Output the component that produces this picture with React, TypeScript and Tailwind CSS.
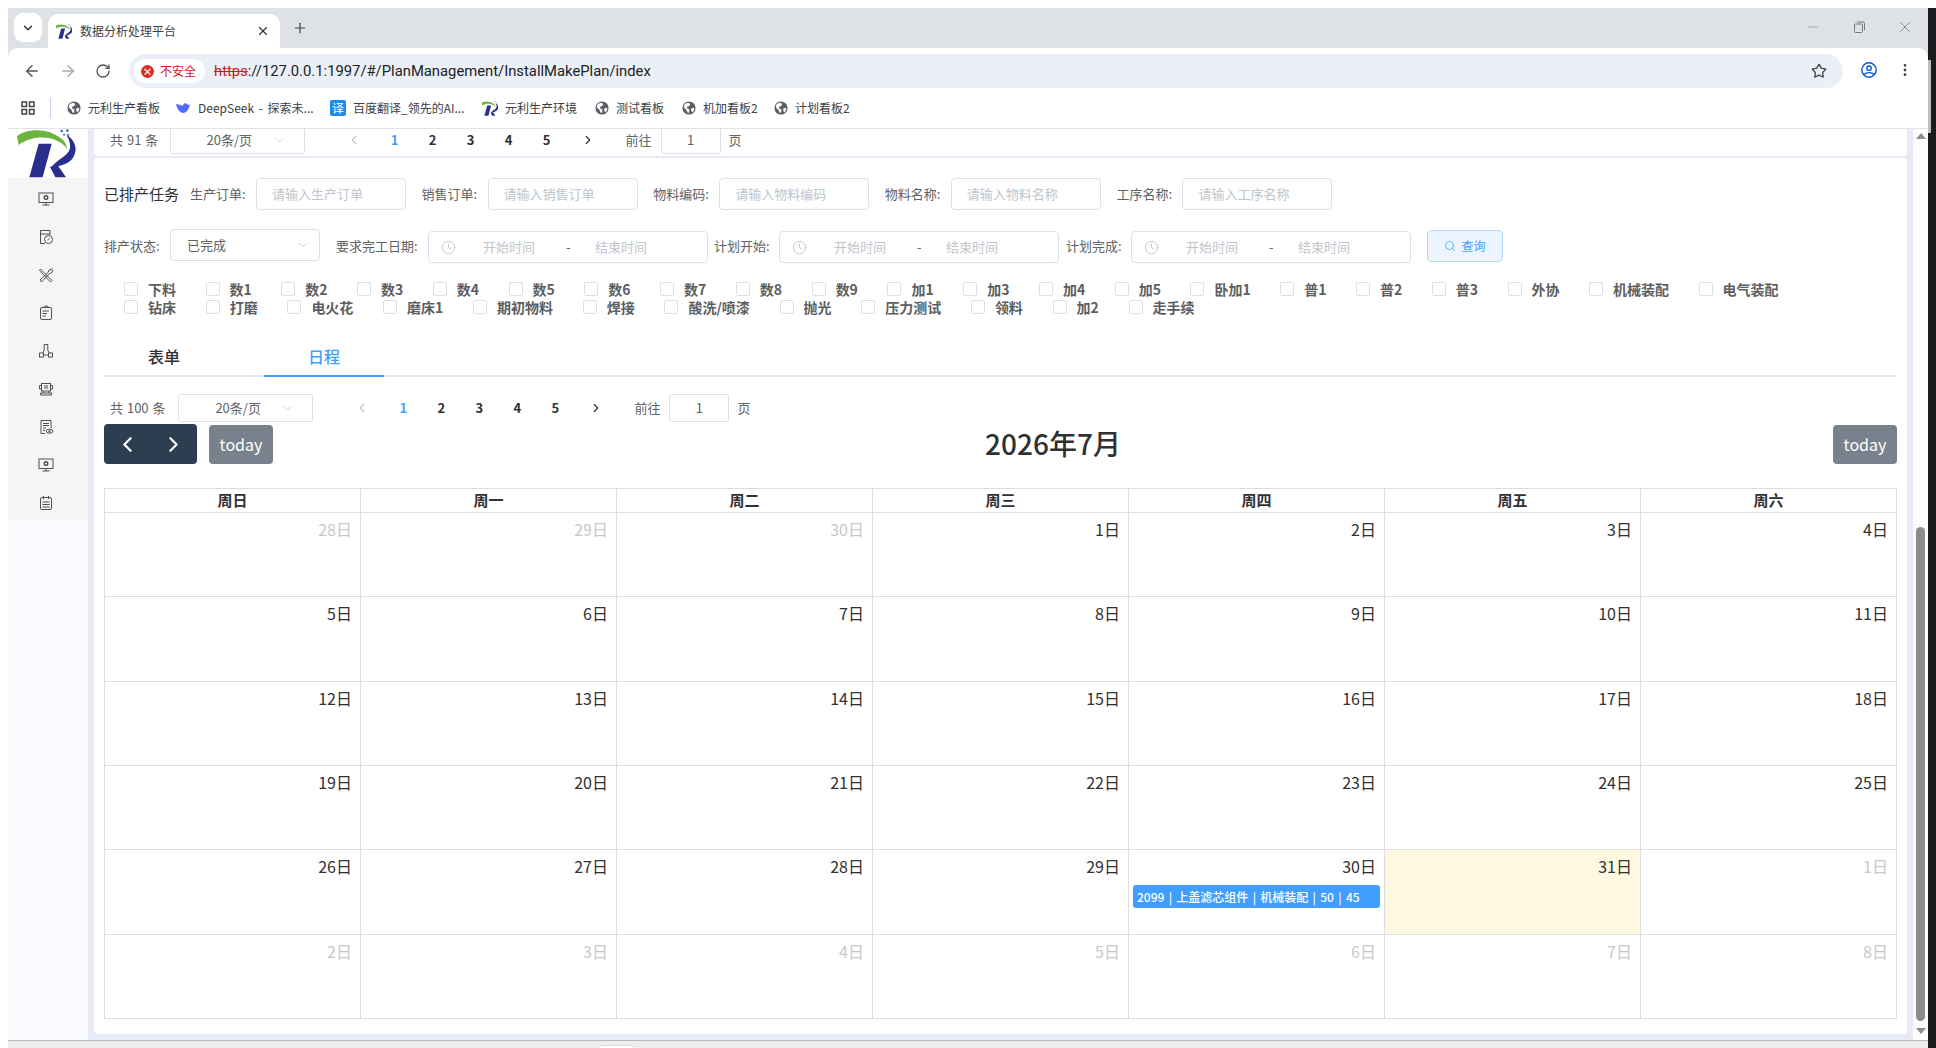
import React from 'react';
import { ArrowLeft, ArrowRight, ChevronDown, ChevronLeft, ChevronRight, Clock, Minus, MoreVertical, Plus, RotateCw, Search, Star, X } from 'lucide-react';

const Logo: React.FC<{ className?: string; viewBox?: string }> = ({ className, viewBox = '0 12 240 147' }) => (
  <svg className={className} viewBox={viewBox}>
    <path d="M27 33 C60 8 125 8 165 45 C172 52 176 62 177 72 C160 45 115 30 70 42 C55 46 42 52 32 60 Z" fill="#6cb33f" />
    <path d="M92 56 L131 56 L104 157 L64 157 Z" fill="#2b2d8c" />
    <path d="M174 28 C200 45 212 72 195 98 C184 114 165 122 130 127 C150 100 180 95 186 70 C188 55 182 40 174 28 Z" fill="#2b2d8c" />
    <path d="M126 125 L150 122 L174 157 L142 157 Z" fill="#2b2d8c" />
    <circle cx="161" cy="18" r="4" fill="#4a6bc8" />
    <circle cx="178" cy="17" r="4" fill="#4a6bc8" />
    <circle cx="168" cy="29" r="3" fill="#4a6bc8" />
    <circle cx="181" cy="29" r="3" fill="#4a6bc8" />
  </svg>
);

const GlobeIcon = () => (
  <svg className="w-[14px] h-[14px] shrink-0" viewBox="0 0 16 16">
    <circle cx="8" cy="8" r="7.5" fill="#5b5e63" />
    <path d="M3 3.5 L7 2 L9.5 3.5 L8 6 L5.5 6.5 L6.5 9 L8.5 9.5 L8 13.5 L6.5 13.5 L5 10 L2 7.5 Z M11 8 L14 8 L13.5 11 L11.5 13 L10.5 10.5 Z" fill="#fff" />
  </svg>
);

const sideIcons: React.ReactNode[] = [
  <g key="a"><rect x="1" y="2" width="14" height="9.5" /><circle cx="8" cy="6.5" r="1.8" strokeWidth="1.4" /><path d="M8 11.5 V14 M4.5 14 H11.5" /></g>,
  <g key="b"><path d="M12 6 V1.5 H2.5 V14.5 H7 M2.5 5 H12" /><circle cx="10.5" cy="10.5" r="4" /><path d="M9.5 11 L11.5 9.5" /></g>,
  <g key="c"><path d="M2.5 2 L14 13.5 L12.5 15 L1.5 3.5 Z" /><path d="M14.5 2 L11 3 L10.5 5 L2 13 L3.5 15 L11.5 6.5 L13.5 6 L15 3" /></g>,
  <g key="d"><rect x="2.5" y="2.5" width="11" height="12" rx="1.5" /><path d="M6 2.5 L7 1 H9.5 L10.5 2.5 M4.5 6 H11 M4.5 8.5 H9 M4.5 11 H8" /></g>,
  <g key="e"><path d="M6.2 7.5 V1.5 H9.8 V7.5" /><rect x="1.5" y="10" width="4" height="4" /><rect x="10.5" y="10" width="4" height="4" /><path d="M5.5 12 H10.5 M6.2 7.5 L4.5 10 M9.8 7.5 L11.5 10" /></g>,
  <g key="f"><rect x="3.5" y="2.5" width="9" height="7.5" /><path d="M3.5 4.5 H1.5 V8 H3.5 M12.5 4.5 H14.5 V8 H12.5 M2.5 12 H13.5 V14 H2.5 Z M5 10 V12 M11 10 V12 M6 5 H10 M6 7 H10" /></g>,
  <g key="g"><path d="M7 14.5 H3 V1.5 H13 V9" /><path d="M5 4.5 H11 M5 6.5 H11 M5 9 H8 M5 11.5 H7" strokeWidth="1.2" /><ellipse cx="11.5" cy="12.2" rx="3.4" ry="2" /><circle cx="11.5" cy="12.2" r="0.8" /></g>,
  <g key="h"><rect x="1" y="2" width="14" height="9.5" /><circle cx="8" cy="6.5" r="1.8" strokeWidth="1.4" /><path d="M8 11.5 V14 M4.5 14 H11.5" /></g>,
  <g key="i"><rect x="2.5" y="2.5" width="11" height="12" rx="1.5" /><path d="M5.5 1 V4 M10.5 1 V4 M4.5 7 H11.5 M4.5 9.5 H11.5 M4.5 12 H11.5" /></g>,
];

const Input: React.FC<{ label: string; text: string }> = ({ label, text }) => (
  <div className="flex items-center">
    <span className="w-[56px] text-[13px] text-[#606266] whitespace-nowrap">{label}:</span>
    <div className="ml-[10px] w-[150px] h-[32px] rounded-[4px] border border-[#dcdfe6] pl-[15px] flex items-center text-[13px] text-[#c0c4cc]">{text}</div>
  </div>
);

const DateRange: React.FC = () => (
  <div className="w-[280px] h-[32px] rounded-[4px] border border-[#dcdfe6] flex items-center text-[13px] text-[#c0c4cc]">
    <Clock className="ml-[12px] w-[15px] h-[15px]" strokeWidth={1.4} />
    <span className="ml-[27px] w-[52px]">开始时间</span>
    <span className="ml-[31px] w-[6px] text-[#606266]">-</span>
    <span className="ml-[23px]">结束时间</span>
  </div>
);

const CheckRow: React.FC<{ items: string[]; gap: string }> = ({ items, gap }) => (
  <div className={`flex h-[18px] items-center ${gap}`}>
    {items.map((t) => (
      <label key={t} className="flex items-center gap-[10px] text-[14px] font-bold leading-[18px] text-[#5c5e62] whitespace-nowrap">
        <span className="w-[14px] h-[14px] rounded-[2px] border border-[#dcdfe6] bg-white" />
        {t}
      </label>
    ))}
  </div>
);

const Pager: React.FC<{ total: string; totalWidth: string }> = ({ total, totalWidth }) => (
  <div className="flex items-center h-[28px] text-[13px] text-[#606266]">
    <span className={`${totalWidth} pl-[6px] whitespace-nowrap [word-spacing:1px]`}>{total}</span>
    <div className="w-[135px] h-[28px] rounded-[3px] border border-[#dcdfe6] flex items-center pl-[36px]">
      <span className="w-[66px]">20条/页</span>
      <ChevronDown className="w-[13px] h-[13px] text-[#c0c4cc]" strokeWidth={1.5} />
    </div>
    <ChevronLeft className="ml-[42px] w-[14px] h-[14px] text-[#c0c4cc]" strokeWidth={2} />
    <div className="ml-[15px] flex font-bold text-[#303133]">
      {['1', '2', '3', '4', '5'].map((n) => (
        <span key={n} className={`w-[38px] text-center ${n === '1' ? 'text-[#409eff]' : ''}`}>{n}</span>
      ))}
    </div>
    <ChevronRight className="ml-[15px] w-[14px] h-[14px] text-[#303133]" strokeWidth={2} />
    <span className="ml-[31px] w-[35px]">前往</span>
    <div className="w-[60px] h-[28px] rounded-[3px] border border-[#dcdfe6] flex items-center justify-center">1</div>
    <span className="ml-[8px]">页</span>
  </div>
);

const row1 = ['下料', '数1', '数2', '数3', '数4', '数5', '数6', '数7', '数8', '数9', '加1', '加3', '加4', '加5', '卧加1', '普1', '普2', '普3', '外协', '机械装配', '电气装配'];
const row2 = ['钻床', '打磨', '电火花', '磨床1', '期初物料', '焊接', '酸洗/喷漆', '抛光', '压力测试', '领料', '加2', '走手续'];
const weekDays = ['周日', '周一', '周二', '周三', '周四', '周五', '周六'];

// 28 June .. 8 August as shown on the calendar page
const days = [
  ...[28, 29, 30].map((d) => ({ d, muted: true })),
  ...Array.from({ length: 31 }, (_, i) => ({ d: i + 1, muted: false })),
  ...Array.from({ length: 8 }, (_, i) => ({ d: i + 1, muted: true })),
];

const bookmarks: { icon: React.ReactNode; text: string; w: string }[] = [
  { icon: <GlobeIcon />, text: '元利生产看板', w: 'w-[108px]' },
  {
    icon: (
      <svg className="w-[16px] h-[14px] shrink-0" viewBox="0 0 16 14">
        <path d="M1 3 C3 12 9 14 12 10 C14 8 14 5 15.5 3.5 L13 4 C11 1 8 2 8 5 C7 4 4 4 1 3 Z" fill="#4d6bfe" />
      </svg>
    ),
    text: 'DeepSeek - 探索未...',
    w: 'w-[155px]',
  },
  {
    icon: <span className="w-[16px] h-[16px] shrink-0 rounded-[2px] bg-[#1a8cf0] text-white text-[12px] leading-[16px] text-center">译</span>,
    text: '百度翻译_领先的AI...',
    w: 'w-[152px]',
  },
  { icon: <Logo className="w-[16px] h-[16px] shrink-0" viewBox="40 0 160 160" />, text: '元利生产环境', w: 'w-[113px]' },
  { icon: <GlobeIcon />, text: '测试看板', w: 'w-[87px]' },
  { icon: <GlobeIcon />, text: '机加看板2', w: 'w-[92px]' },
  { icon: <GlobeIcon />, text: '计划看板2', w: 'w-[84px]' },
];

export default function App() {
  return (
    <div className="w-[1936px] h-[1048px] bg-white overflow-hidden flex flex-col font-['Noto_Sans_CJK_SC','Noto_Sans',sans-serif]">
      <div className="h-2 shrink-0" />
      <div className="flex h-[1040px]">
        <div className="w-2 shrink-0" />
        <div className="w-[1920px] flex flex-col">
          {/* tab strip */}
          <div className="h-10 shrink-0 bg-[#dee1e6] flex items-end">
            <div className="ml-[6px] mb-[6px] w-[28px] h-[29px] rounded-[9px] bg-white flex items-center justify-center">
              <ChevronDown className="w-[14px] h-[14px] text-[#333]" strokeWidth={2.5} />
            </div>
            <div className="ml-[6px] w-[232px] h-[34px] bg-white rounded-t-[10px] flex items-center pl-[8px]">
              <Logo className="w-[16px] h-[16px]" viewBox="40 0 160 160" />
              <span className="ml-[8px] w-[176px] text-[12px] text-[#3c4043]">数据分析处理平台</span>
              <X className="w-[14px] h-[14px] text-[#333]" strokeWidth={2} />
            </div>
            <Plus className="ml-[12px] mb-[12px] w-[16px] h-[16px] text-[#444]" strokeWidth={1.8} />
            <div className="flex-1" />
            <div className="mb-[12px] flex items-center text-[#777]">
              <Minus className="w-[14px] h-[14px]" strokeWidth={1} />
              <svg className="ml-[32px] w-[14px] h-[14px]" viewBox="0 0 14 14" fill="none" stroke="currentColor">
                <rect x="2.5" y="4" width="8" height="8.5" rx="1" />
                <path d="M5 2 H11 Q12.5 2 12.5 3.5 V10" />
              </svg>
              <X className="ml-[30px] mr-[14px] w-[18px] h-[18px]" strokeWidth={1} />
            </div>
          </div>
          {/* address bar */}
          <div className="h-10 shrink-0 bg-[#dee1e6]">
            <div className="h-10 bg-white rounded-t-[10px] flex items-start">
              <div className="mt-[14px] ml-[15px] flex items-center">
                <ArrowLeft className="w-[18px] h-[18px] text-[#555]" strokeWidth={2} />
                <ArrowRight className="ml-[18px] w-[18px] h-[18px] text-[#aaa]" strokeWidth={2} />
                <RotateCw className="ml-[18px] w-[16px] h-[16px] text-[#555]" strokeWidth={2} />
              </div>
              <div className="ml-[18px] mt-[6px] w-[1714px] h-[34px] rounded-full bg-[#ebf0f8] flex items-center pl-[5px]">
                <div className="w-[71px] h-[24px] rounded-full bg-white flex items-center pl-[7px]">
                  <span className="w-[13px] h-[13px] rounded-full bg-[#d93025] text-white text-[10px] leading-[13px] text-center font-bold">×</span>
                  <span className="ml-[6px] text-[12px] text-[#c5221f]">不安全</span>
                </div>
                <span className="ml-[9px] text-[14.8px] text-[#202124] font-['Roboto',sans-serif]">
                  <span className="text-[#c5221f] line-through">https</span>://127.0.0.1:1997/#/PlanManagement/InstallMakePlan/index
                </span>
                <div className="flex-1" />
                <Star className="mr-[16px] w-[16px] h-[16px] text-[#444]" strokeWidth={2} />
              </div>
              <div className="mt-[14px] ml-[18px] flex items-center">
                <svg className="w-[16px] h-[16px]" viewBox="0 0 16 16" fill="none" stroke="#0b57d0" strokeWidth="1.4">
                  <circle cx="8" cy="8" r="7.2" />
                  <circle cx="8" cy="6.2" r="2.2" />
                  <path d="M3.2 12.5 C5 10 11 10 12.8 12.5" />
                </svg>
                <MoreVertical className="ml-[20px] w-[16px] h-[16px] text-[#444]" strokeWidth={2.2} />
              </div>
            </div>
          </div>
          {/* bookmarks */}
          <div className="h-10 shrink-0 bg-white flex items-center pb-[1px] text-[12px] text-[#3c4043]">
            <svg className="ml-[13px] w-[14px] h-[14px]" viewBox="0 0 14 14" fill="none" stroke="#444" strokeWidth="1.5">
              <rect x="1" y="1" width="4.5" height="4.5" />
              <rect x="8.5" y="1" width="4.5" height="4.5" />
              <rect x="1" y="8.5" width="4.5" height="4.5" />
              <rect x="8.5" y="8.5" width="4.5" height="4.5" />
            </svg>
            <span className="ml-[15px] mr-[16px] w-px h-[20px] bg-[#c8d4ea]" />
            {bookmarks.map((b) => (
              <div key={b.text} className={`flex items-center gap-[7px] whitespace-nowrap [word-spacing:2px] ${b.w} shrink-0`}>
                {b.icon}
                <span>{b.text}</span>
              </div>
            ))}
          </div>
          {/* page */}
          <div className="flex h-[912px] border-t border-[#e1e3e6] overflow-hidden">
            <aside className="w-20 shrink-0 bg-[#fafbff] flex flex-col">
              <div className="h-[49px] bg-white overflow-hidden">
                <Logo className="w-[80px] h-[49px]" />
              </div>
              <div className="h-[342px] bg-[#f5f5f5] flex flex-col pt-[2px] pr-[4px]">
                {sideIcons.map((icon, i) => (
                  <div key={i} className="h-[38px] shrink-0 flex items-center justify-center">
                    <svg className="w-[16px] h-[16px]" viewBox="0 0 16 16" fill="none" stroke="#4f4f4f" strokeWidth="1">
                      {icon}
                    </svg>
                  </div>
                ))}
              </div>
            </aside>
            <main className="w-[1825px] bg-[#e8ebf5] pl-[6px] pr-[6px] flex flex-col">
              <div className="h-[27px] shrink-0 bg-white rounded-b-[4px] pl-[10px] overflow-hidden">
                <div className="-mt-[3px]">
                  <Pager total="共 91 条" totalWidth="w-[65.6px]" />
                </div>
              </div>
              <div className="mt-[2px] h-[876px] shrink-0 bg-white rounded-[4px] pl-[10px] pt-[20px]">
                <div className="flex items-center h-[32px]">
                  <span className="w-[86px] text-[15px] text-[#303133] whitespace-nowrap">已排产任务</span>
                  <div className="flex gap-[15.6px]">
                    <Input label="生产订单" text="请输入生产订单" />
                    <Input label="销售订单" text="请输入销售订单" />
                    <Input label="物料编码" text="请输入物料编码" />
                    <Input label="物料名称" text="请输入物料名称" />
                    <Input label="工序名称" text="请输入工序名称" />
                  </div>
                </div>
                <div className="mt-[19px] flex items-center h-[34px] text-[13px] text-[#606266]">
                  <span className="w-[66px]">排产状态:</span>
                  <div className="-mt-[2px] w-[150px] h-[32px] rounded-[4px] border border-[#dcdfe6] flex items-center pl-[16px]">
                    <span className="w-[109px]">已完成</span>
                    <ChevronDown className="w-[14px] h-[14px] text-[#c0c4cc]" strokeWidth={1.5} />
                  </div>
                  <span className="ml-[16px] w-[92px] whitespace-nowrap">要求完工日期:</span>
                  <div className="mt-[2px]"><DateRange /></div>
                  <span className="ml-[6px] w-[65px] whitespace-nowrap">计划开始:</span>
                  <div className="mt-[2px]"><DateRange /></div>
                  <span className="ml-[7px] w-[65px] whitespace-nowrap">计划完成:</span>
                  <div className="mt-[2px]"><DateRange /></div>
                  <button className="ml-[16px] w-[76px] h-[32px] rounded-[4px] border border-[#b3d8ff] bg-[#ecf5ff] text-[#409eff] text-[12px] flex items-center justify-center gap-[5px]">
                    <Search className="w-[12px] h-[12px]" strokeWidth={1.6} />
                    查询
                  </button>
                </div>
                <div className="mt-[17px] pl-[20px] flex flex-col">
                  <CheckRow items={row1} gap="gap-[29.5px]" />
                  <CheckRow items={row2} gap="gap-[29.7px]" />
                </div>
                <div className="mt-[19px] w-[1793px] h-[42px] border-b-[2px] border-[#e4e7ed] flex text-[16px] font-medium">
                  <div className="w-[120px] h-[42px] flex items-center justify-center text-[#303133]">表单</div>
                  <div className="ml-[40px] w-[120px] h-[42px] pt-[2px] flex items-center justify-center text-[#409eff] border-b-[2px] border-[#409eff]">日程</div>
                </div>
                <div className="mt-[17px]">
                  <Pager total="共 100 条" totalWidth="w-[74.4px]" />
                </div>
                <div className="mt-[2px] w-[1793px] h-[40px] flex items-center justify-between">
                  <div className="flex items-center">
                    <div className="w-[93px] h-[40px] rounded-[4px] bg-[#2c3e50] flex items-center justify-center gap-[21px] text-white">
                      <ChevronLeft className="w-[25px] h-[25px]" strokeWidth={2.2} />
                      <ChevronRight className="w-[25px] h-[25px]" strokeWidth={2.2} />
                    </div>
                    <button className="ml-[12px] w-[64px] h-[39px] rounded-[4px] bg-[#79818d] text-white text-[16px]">today</button>
                  </div>
                  <h2 className="pb-[3px] text-[28px] font-medium text-[#303133] whitespace-nowrap">2026年7月</h2>
                  <button className="w-[64px] h-[39px] rounded-[4px] bg-[#79818d] text-white text-[16px]">today</button>
                </div>
                <div className="mt-[24px] w-[1793px] border-t border-l border-[#dddddd] grid grid-cols-7">
                  {weekDays.map((w) => (
                    <div key={w} className="h-[24px] border-r border-b border-[#dddddd] flex items-center justify-center text-[15px] font-bold text-[#303133]">{w}</div>
                  ))}
                </div>
                <div className="w-[1793px] h-[506px] border-l border-[#dddddd] grid grid-cols-7 grid-rows-6">
                  {days.map(({ d, muted }, i) => (
                    <div key={i} className={`border-r border-b border-[#dddddd] pt-[3px] flex flex-col ${!muted && d === 31 ? 'bg-[#fef8e0]' : ''}`}>
                      <span className={`pr-[8px] text-right text-[16px] leading-[26px] ${muted ? 'text-[#c8c8c8]' : 'text-[#303133]'}`}>{d}日</span>
                      {!muted && d === 30 && (
                        <div className="mx-[4px] mt-[6px] h-[23px] rounded-[3px] bg-[#409eff] pl-[4px] text-white text-[12px] font-medium leading-[23px] whitespace-nowrap [word-spacing:1.6px]">
                          2099 | 上盖滤芯组件 | 机械装配 | 50 | 45
                        </div>
                      )}
                    </div>
                  ))}
                </div>
              </div>
            </main>
            <div className="w-[15px] shrink-0 bg-[#fcfcfe] flex flex-col items-center">
              <div className="mt-[4px] w-0 h-0 border-x-[5px] border-x-transparent border-b-[6px] border-b-[#8c8c8c]" />
              <div className="mt-[388px] w-[9px] h-[494px] rounded-t-[5px] rounded-b-[5px] bg-[#8c8c8c]" />
              <div className="mt-[7px] w-0 h-0 border-x-[5px] border-x-transparent border-t-[6px] border-t-[#8c8c8c]" />
            </div>
          </div>
          <div className="h-2 shrink-0 bg-[#eeeeee] border-t border-[#b9b9b9]">
            <div className="ml-[590px] mt-[4px] w-[37px] h-[4px] rounded-t-[4px] bg-white border-t border-x border-[#dcdcdc]" />
          </div>
        </div>
        <div className="w-2 shrink-0 bg-[#1b1b1b]">
          <div className="mt-[52px] w-[3px] h-[73px] bg-[#bdbdbd]" />
        </div>
      </div>
    </div>
  );
}
